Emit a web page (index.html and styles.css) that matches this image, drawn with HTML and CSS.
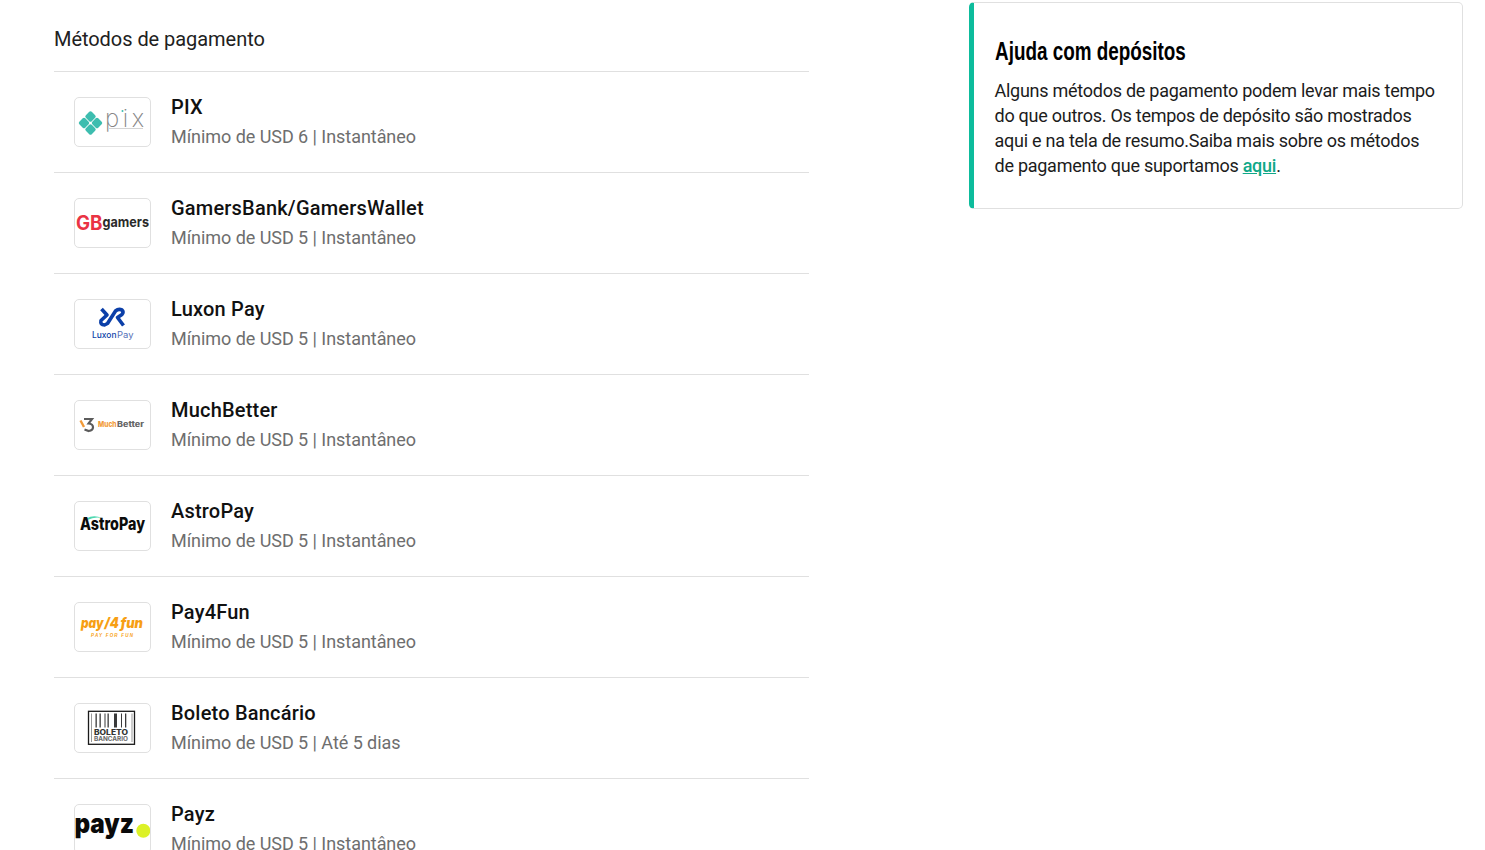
FILE: index.html
```html
<!DOCTYPE html>
<html lang="pt-BR">
<head>
<meta charset="utf-8">
<title>Métodos de pagamento</title>
<link rel="stylesheet" href="styles.css">
</head>
<body>
<div class="page">
  <main class="methods">
    <h2 class="methods-title">Métodos de pagamento</h2>
    <ul class="method-list">
      <li class="method">
        <div class="logo">
          <svg viewBox="0 0 77 50" width="77" height="50">
            <g fill="#3dbdaf">
              <rect x="12.300" y="15.300" width="8.400" height="8.400" rx="1.800" transform="rotate(45 16.500 19.500)"/>
              <rect x="5.800" y="21.800" width="8.400" height="8.400" rx="1.800" transform="rotate(45 10 26)"/>
              <rect x="18.800" y="21.800" width="8.400" height="8.400" rx="1.800" transform="rotate(45 23 26)"/>
              <rect x="12.300" y="28.300" width="8.400" height="8.400" rx="1.800" transform="rotate(45 16.500 32.500)"/>
            </g>
            <text x="31" y="29.500" textLength="39" class="pix-text">pix</text>
            <circle cx="48.500" cy="14" r="1" fill="#3dbdaf"/>
            <path d="M35 31.500h34" stroke="#d4d4d4" stroke-width="1"/>
          </svg>
        </div>
        <div class="info">
          <div class="name">PIX</div>
          <div class="detail">Mínimo de USD 6 | Instantâneo</div>
        </div>
      </li>
      <li class="method">
        <div class="logo">
          <svg viewBox="0 0 77 50" width="77" height="50">
            <text x="2" y="32" textLength="26.500" lengthAdjust="spacingAndGlyphs" class="gb-mark">GB</text>
            <text x="28.500" y="29" textLength="46.500" lengthAdjust="spacingAndGlyphs" class="gb-text">gamers</text>
          </svg>
        </div>
        <div class="info">
          <div class="name">GamersBank/GamersWallet</div>
          <div class="detail">Mínimo de USD 5 | Instantâneo</div>
        </div>
      </li>
      <li class="method">
        <div class="logo">
          <svg viewBox="0 0 77 50" width="77" height="50">
            <path d="M27.500 10L33 16L27 21.500Q26 26 30.500 26L33.500 24.500L41.500 12Q44.500 9.500 48 11Q50 13 48 15.500L43.500 18.500L49.500 26.500" fill="none" stroke="#0b3fa8" stroke-width="3.600" stroke-linejoin="round"/>
            <text x="18" y="39" textLength="24.500" lengthAdjust="spacingAndGlyphs" class="lux-a">Luxon</text>
            <text x="43" y="39" textLength="16.500" lengthAdjust="spacingAndGlyphs" class="lux-b">Pay</text>
          </svg>
        </div>
        <div class="info">
          <div class="name">Luxon Pay</div>
          <div class="detail">Mínimo de USD 5 | Instantâneo</div>
        </div>
      </li>
      <li class="method">
        <div class="logo">
          <svg viewBox="0 0 77 50" width="77" height="50">
            <path d="M6.500 20.500l3.500 6.500" stroke="#f29a38" stroke-width="2.400" fill="none"/>
            <path d="M10 19h8l-3.500 4.500q4.500.5 4.500 3.700t-4.200 3.800l-4.300-1.500" stroke="#5c5c5c" stroke-width="2.200" fill="none"/>
            <text x="24" y="27" textLength="18.500" lengthAdjust="spacingAndGlyphs" class="mb-a">Much</text>
            <text x="43" y="27" textLength="27" lengthAdjust="spacingAndGlyphs" class="mb-b">Better</text>
          </svg>
        </div>
        <div class="info">
          <div class="name">MuchBetter</div>
          <div class="detail">Mínimo de USD 5 | Instantâneo</div>
        </div>
      </li>
      <li class="method">
        <div class="logo">
          <svg viewBox="0 0 77 50" width="77" height="50">
            <path d="M12.500 17.500q7-4 15.500-.5-7.500-1.800-14.500 2z" fill="#4fd8b0"/>
            <text x="6" y="29" textLength="65" lengthAdjust="spacingAndGlyphs" class="astro">AstroPay</text>
          </svg>
        </div>
        <div class="info">
          <div class="name">AstroPay</div>
          <div class="detail">Mínimo de USD 5 | Instantâneo</div>
        </div>
      </li>
      <li class="method">
        <div class="logo">
          <svg viewBox="0 0 77 50" width="77" height="50">
            <text x="7" y="25.500" textLength="22.500" lengthAdjust="spacingAndGlyphs" class="p4f">pay</text>
            <text x="30.500" y="25.500" textLength="14.500" lengthAdjust="spacingAndGlyphs" class="p4f">/4</text>
            <text x="46.500" y="25.500" textLength="22.500" lengthAdjust="spacingAndGlyphs" class="p4f">fun</text>
            <text x="17" y="35" textLength="42" class="p4f-sub">PAY FOR FUN</text>
          </svg>
        </div>
        <div class="info">
          <div class="name">Pay4Fun</div>
          <div class="detail">Mínimo de USD 5 | Instantâneo</div>
        </div>
      </li>
      <li class="method">
        <div class="logo">
          <svg viewBox="0 0 77 50" width="77" height="50">
            <rect x="14.500" y="8.300" width="46" height="33" fill="#fff" stroke="#1a1a1a" stroke-width="1.300"/>
            <g fill="#9a9a9a">
              <rect x="17" y="10.500" width="1" height="28.500"/>
              <rect x="57.500" y="10.500" width="1" height="28.500"/>
            </g>
            <g fill="#3a3a3a">
              <rect x="21.500" y="10.500" width="1.300" height="14"/>
              <rect x="25.500" y="10.500" width="1.300" height="14"/>
              <rect x="30.500" y="10.500" width="1" height="14"/>
              <rect x="33.500" y="10.500" width="1.300" height="14"/>
              <rect x="40" y="10.500" width="3" height="14"/>
              <rect x="47" y="10.500" width="1" height="14"/>
              <rect x="51" y="10.500" width="1.300" height="14"/>
            </g>
            <text x="20" y="31.500" textLength="34" lengthAdjust="spacingAndGlyphs" class="bol-a">BOLETO</text>
            <text x="20" y="38" textLength="34" lengthAdjust="spacingAndGlyphs" class="bol-b">BANCÁRIO</text>
          </svg>
        </div>
        <div class="info">
          <div class="name">Boleto Bancário</div>
          <div class="detail">Mínimo de USD 5 | Até 5 dias</div>
        </div>
      </li>
      <li class="method">
        <div class="logo">
          <svg viewBox="0 0 77 50" width="77" height="50">
            <circle cx="69.300" cy="26.700" r="7" fill="#dcf127"/>
            <text x="0.500" y="29" textLength="59.500" lengthAdjust="spacingAndGlyphs" class="payz">payz</text>
          </svg>
        </div>
        <div class="info">
          <div class="name">Payz</div>
          <div class="detail">Mínimo de USD 5 | Instantâneo</div>
        </div>
      </li>
    </ul>
  </main>
  <aside class="help">
    <h3 class="help-title"><span class="help-title-text">Ajuda com depósitos</span></h3>
    <p class="help-text">Alguns métodos de pagamento podem levar mais tempo do que outros. Os tempos de depósito são mostrados aqui e na tela de resumo.Saiba mais sobre os métodos de pagamento que suportamos <a class="help-link" href="#">aqui</a>.</p>
  </aside>
</div>
</body>
</html>
```

FILE: styles.css
```css
html, body {
  margin: 0;
  padding: 0;
  height: 850px;
  overflow: hidden;
  background: #fff;
}
body {
  font-family: Roboto, "Liberation Sans", sans-serif;
  color: #000;
}
.page {
  display: flex;
  align-items: flex-start;
  padding: 2px 0 0 54px;
}
.methods {
  width: 755px;
  flex: none;
}
.methods-title {
  margin: 0;
  padding: 24px 0 19px;
  font-size: 20px;
  line-height: 26px;
  font-weight: 400;
  letter-spacing: -0.05px;
  color: #212121;
  border-bottom: 1px solid #e0e0e0;
}
.method-list {
  list-style: none;
  margin: 0;
  padding: 0;
}
.method {
  display: flex;
  align-items: center;
  gap: 20px;
  height: 100px;
  padding-left: 20px;
  border-bottom: 1px solid #e0e0e0;
}
.logo {
  width: 77px;
  height: 50px;
  flex: none;
  box-sizing: border-box;
  border: 1px solid #e0e0e0;
  border-radius: 5px;
  overflow: hidden;
  background: #fff;
}
.logo svg {
  display: block;
  margin: -1px;
}
.info {
  display: flex;
  flex-direction: column;
  gap: 4px;
}
.name {
  font-size: 20px;
  line-height: 26px;
  font-weight: 500;
  letter-spacing: 0.2px;
  color: #111;
}
.detail {
  font-size: 18px;
  line-height: 26px;
  letter-spacing: -0.05px;
  color: #6e6e6e;
}
.help {
  box-sizing: border-box;
  width: 494px;
  height: 207px;
  margin-left: 160px;
  padding: 30px 20px 0 20.500px;
  border: 1px solid #e0e0e0;
  border-left: 5px solid #0dbc9c;
  border-radius: 5px;
}
.help-title {
  margin: 0 0 9px;
  font-family: "Liberation Sans", sans-serif;
  font-size: 25px;
  line-height: 36px;
  font-weight: 700;
  color: #000;
}
.help-title-text {
  display: inline-block;
  transform: scaleX(0.755);
  transform-origin: left center;
  white-space: nowrap;
}
.help-text {
  margin: 0;
  font-size: 18px;
  line-height: 25px;
  letter-spacing: -0.26px;
  color: #1c1c1c;
}
.help-link {
  color: #10a888;
  font-weight: 500;
  text-decoration: underline;
}
.pix-text {
  font-family: Inter, sans-serif;
  font-size: 24px;
  font-weight: 200;
  fill: #858585;
}
.gb-mark {
  font-family: Inter, sans-serif;
  font-size: 19.500px;
  font-weight: 700;
  fill: #ea3344;
}
.gb-text {
  font-family: Inter, sans-serif;
  font-size: 14px;
  font-weight: 700;
  fill: #2a2a2a;
}
.lux-a, .lux-b {
  font-family: Inter, sans-serif;
  font-size: 9px;
}
.lux-a { fill: #0b3fa8; font-weight: 500; }
.lux-b { fill: #5873b8; font-weight: 400; }
.mb-a, .mb-b {
  font-family: Inter, sans-serif;
  font-size: 7.500px;
  font-weight: 800;
}
.mb-a { fill: #f29a38; }
.mb-b { fill: #666; }
.astro {
  font-family: Inter, sans-serif;
  font-size: 17px;
  font-weight: 800;
  fill: #0c0c0c;
}
.p4f {
  font-family: Inter, sans-serif;
  font-size: 14px;
  font-weight: 900;
  font-style: italic;
  fill: #f79f14;
}
.p4f-sub {
  font-family: "Liberation Sans", sans-serif;
  font-size: 4.500px;
  font-weight: 700;
  font-style: italic;
  fill: #f79f14;
}
.bol-a {
  font-family: Inter, sans-serif;
  font-size: 7px;
  font-weight: 800;
  fill: #333;
}
.bol-b {
  font-family: Inter, sans-serif;
  font-size: 5.500px;
  font-weight: 700;
  fill: #666;
}
.payz {
  font-family: Inter, sans-serif;
  font-size: 27px;
  font-weight: 900;
  fill: #0a0a0a;
}
```
